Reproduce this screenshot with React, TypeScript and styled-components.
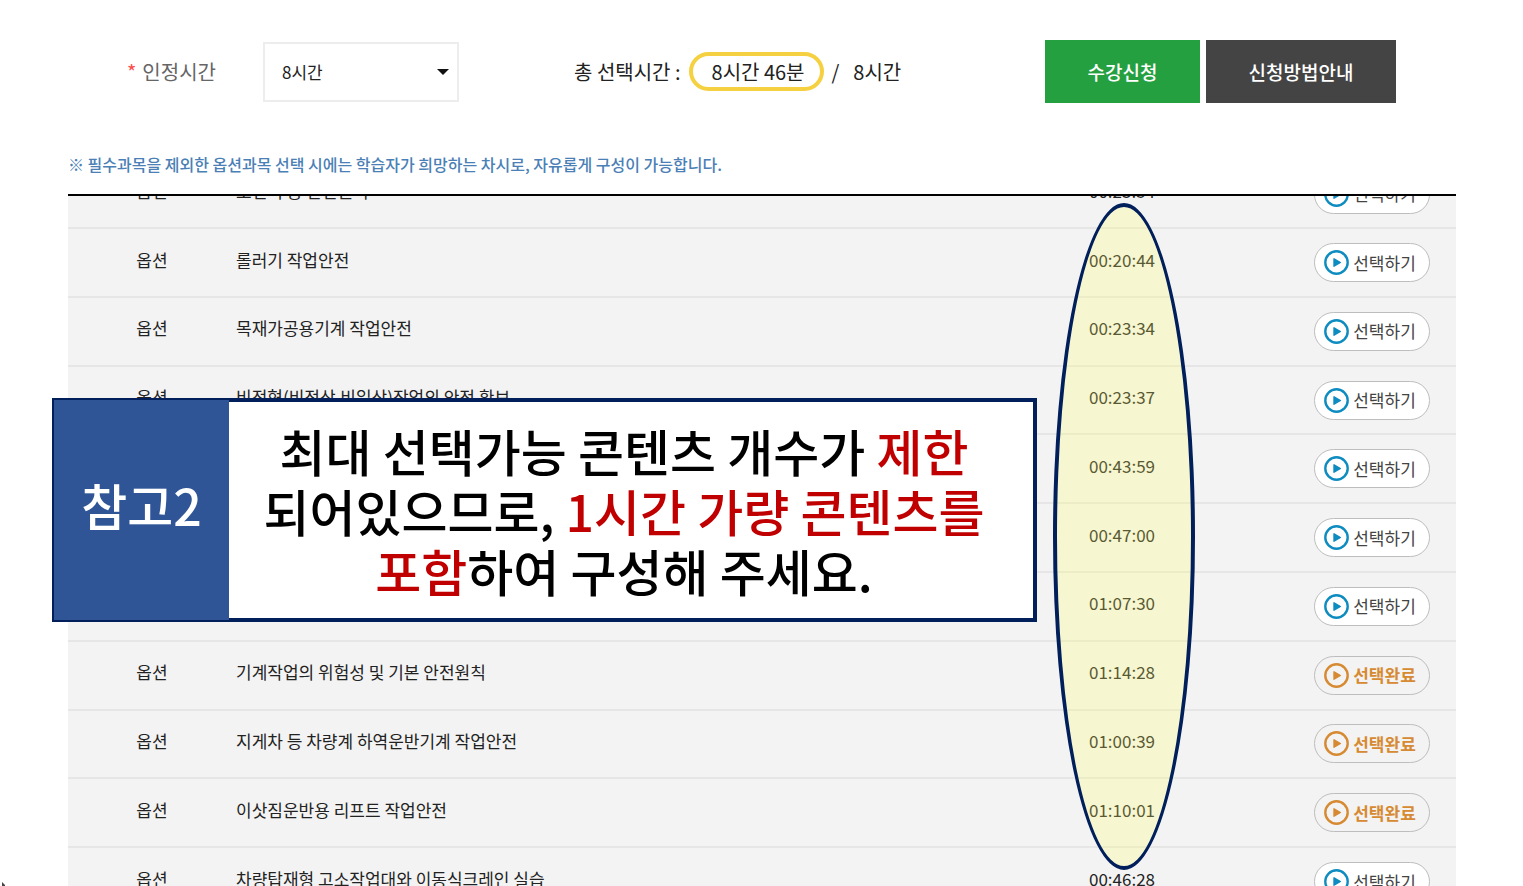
import React from "react";
import styled, { createGlobalStyle } from "styled-components";

const GlobalStyle = createGlobalStyle`
  *, *::before, *::after { box-sizing: border-box; }
  body {
    margin: 0;
    background: #fff;
    color: #222;
    font-family: "Noto Sans CJK KR", "Noto Sans", sans-serif;
    font-size: 17px;
    line-height: 24px;
  }
  button, select { font: inherit; color: inherit; }
`;

const Page = styled.main`
  position: relative;
  display: flex;
  flex-direction: column;
  height: 100vh;
  overflow: hidden;
  padding: 40px 67px 0 68px;
`;

const Toolbar = styled.form`
  display: flex;
  align-items: center;
  padding: 0 60px 0 59px;
  font-size: 20px;
`;

const FieldLabel = styled.label`
  width: 136px;
  color: #666;
`;

const Required = styled.span`
  margin-right: 6px;
  color: #ff4b4b;
`;

const SelectBox = styled.div`
  display: grid;
  align-items: center;
  width: 196px;

  > * { grid-area: 1 / 1; }
  > svg { justify-self: end; margin-right: 10px; pointer-events: none; }
`;

const Select = styled.select`
  appearance: none;
  width: 100%;
  height: 60px;
  padding: 0 17px;
  border: 2px solid #ededed;
  border-radius: 0;
  background: #fff;
  font-size: 17px;
`;

const Total = styled.p`
  display: flex;
  align-items: center;
  gap: 8px;
  margin: 0 0 0 115px;
`;

const Selected = styled.strong`
  padding: 0 15px 0 19px;
  border: 4px solid #f5d142;
  border-radius: 20px;
  line-height: 31px;
  font-weight: 400;
`;

const Limit = styled.span`
  margin-left: 6px;
`;

const Actions = styled.div`
  display: flex;
  gap: 6px;
  margin-left: auto;
`;

const ActionButton = styled.button<{ $tone: string; $wide?: boolean }>`
  width: ${(p) => (p.$wide ? 190 : 155)}px;
  height: 63px;
  padding: 0;
  border: 0;
  background: ${(p) => p.$tone};
  color: #fff;
  font-size: 19px;
  font-weight: 500;
`;

const Notice = styled.p`
  margin: 49px 0 18px;
  color: #4a80b5;
  font-size: 16px;
  font-weight: 500;
`;

const ListViewport = styled.section`
  flex: 1;
  min-height: 0;
  overflow: hidden;
  border-top: 2px solid #000;
`;

const Table = styled.table`
  width: 100%;
  height: 756px;
  margin-top: -35px;
  border-collapse: collapse;
  table-layout: fixed;
  background: #f3f3f3;
`;

const Row = styled.tr`
  border-bottom: 2px solid #e6e6e6;
`;

const Cell = styled.td<{ $width?: number; $left?: boolean }>`
  width: ${(p) => (p.$width ? `${p.$width}px` : "auto")};
  padding: 0 0 6px;
  text-align: ${(p) => (p.$left ? "left" : "center")};
`;

const PillCell = styled(Cell)`
  padding: 0;
`;

const Pill = styled.button<{ $done: boolean }>`
  display: inline-flex;
  align-items: center;
  gap: 4px;
  height: 39px;
  padding: 0 13px 0 9px;
  border: 1px solid #bdbdbd;
  border-radius: 20px;
  background: ${(p) => (p.$done ? "transparent" : "#fff")};
  color: ${(p) => (p.$done ? "#d68a32" : "#444")};
  font-weight: ${(p) => (p.$done ? 700 : 400)};
  vertical-align: middle;

  > svg { color: ${(p) => (p.$done ? "#d68a32" : "#0e8cc0")}; }
`;

const TimeHighlight = styled.div`
  position: absolute;
  top: 203px;
  right: 328px;
  width: 142px;
  height: 667px;
  border: 4px solid #001f5b;
  border-radius: 50%;
  background: rgba(255, 255, 102, 0.25);
  pointer-events: none;
`;

const Callout = styled.aside`
  position: absolute;
  top: 398px;
  left: 52px;
  right: 486px;
  display: flex;
  min-height: 224px;
  color: #000;
  font-size: 50px;
  font-weight: 500;
  line-height: 60px;
`;

const CalloutTag = styled.h2`
  display: flex;
  align-items: center;
  justify-content: center;
  width: 177px;
  margin: 0;
  padding-bottom: 12px;
  border: 2px solid #001f5b;
  border-right: 0;
  background: #2f5597;
  color: #fff;
  font-size: 50px;
  font-weight: 500;
`;

const CalloutText = styled.p`
  flex: 1;
  display: flex;
  flex-direction: column;
  justify-content: center;
  margin: 0;
  border: 4px solid #001f5b;
  border-left: 0;
  background: #fff;
  padding-right: 14px;
  text-align: center;
  white-space: nowrap;
`;

const Accent = styled.em`
  color: #c00000;
  font-style: normal;
`;

const Pointer = styled.svg`
  position: absolute;
  left: 0;
  bottom: 0;
`;

const PlayIcon = () => (
  <svg width="25" height="25" viewBox="0 0 25 25" aria-hidden="true">
    <circle cx="12.5" cy="12.5" r="11.2" fill="none" stroke="currentColor" strokeWidth="2.4" />
    <path d="M10 8.8v7.4l6.4-3.7z" fill="currentColor" stroke="currentColor" strokeWidth="1.4" strokeLinejoin="round" />
  </svg>
);

const lessons = [
  { kind: "옵션", title: "도전적 등 안전원칙", time: "00:23:54", done: false },
  { kind: "옵션", title: "롤러기 작업안전", time: "00:20:44", done: false },
  { kind: "옵션", title: "목재가공용기계 작업안전", time: "00:23:34", done: false },
  { kind: "옵션", title: "비정형(비정상,비일상)작업의 안전 확보", time: "00:23:37", done: false },
  { kind: "", title: "", time: "00:43:59", done: false },
  { kind: "", title: "", time: "00:47:00", done: false },
  { kind: "", title: "", time: "01:07:30", done: false },
  { kind: "옵션", title: "기계작업의 위험성 및 기본 안전원칙", time: "01:14:28", done: true },
  { kind: "옵션", title: "지게차 등 차량계 하역운반기계 작업안전", time: "01:00:39", done: true },
  { kind: "옵션", title: "이삿짐운반용 리프트 작업안전", time: "01:10:01", done: true },
  { kind: "옵션", title: "차량탑재형 고소작업대와 이동식크레인 실습", time: "00:46:28", done: false },
];

export default function App() {
  return (
    <>
      <GlobalStyle />
      <Page>
        <Toolbar onSubmit={(e) => e.preventDefault()}>
          <FieldLabel htmlFor="hours">
            <Required>*</Required>인정시간
          </FieldLabel>
          <SelectBox>
            <Select id="hours" defaultValue="8">
              <option value="8">8시간</option>
            </Select>
            <svg width="12" height="6" viewBox="0 0 12 6" aria-hidden="true">
              <path d="M0 0h12L6 6z" fill="#111" />
            </svg>
          </SelectBox>
          <Total>
            <span>총 선택시간 :</span>
            <Selected>8시간 46분</Selected>
            <span>/</span>
            <Limit>8시간</Limit>
          </Total>
          <Actions>
            <ActionButton type="submit" $tone="#25a041">수강신청</ActionButton>
            <ActionButton type="button" $tone="#444" $wide>신청방법안내</ActionButton>
          </Actions>
        </Toolbar>

        <Notice>
          ※ 필수과목을 제외한 옵션과목 선택 시에는 학습자가 희망하는 차시로, 자유롭게 구성이 가능합니다.
        </Notice>

        <ListViewport>
          <Table>
            <tbody>
              {lessons.map((lesson) => (
                <Row key={lesson.time}>
                  <Cell $width={168}>{lesson.kind}</Cell>
                  <Cell $left>{lesson.title}</Cell>
                  <Cell $width={332}>{lesson.time}</Cell>
                  <PillCell $width={168}>
                    <Pill type="button" $done={lesson.done}>
                      <PlayIcon />
                      {lesson.done ? "선택완료" : "선택하기"}
                    </Pill>
                  </PillCell>
                </Row>
              ))}
            </tbody>
          </Table>
        </ListViewport>

        <TimeHighlight />

        <Callout>
          <CalloutTag>참고2</CalloutTag>
          <CalloutText>
            <span>최대 선택가능 콘텐츠 개수가 <Accent>제한</Accent></span>
            <span>되어있으므로, <Accent>1시간 가량 콘텐츠를</Accent></span>
            <span><Accent>포함</Accent>하여 구성해 주세요.</span>
          </CalloutText>
        </Callout>

        <Pointer width="5" height="4" viewBox="0 0 5 4" aria-hidden="true">
          <path d="M2 0l3 3v1H2z" fill="#444" />
        </Pointer>
      </Page>
    </>
  );
}
